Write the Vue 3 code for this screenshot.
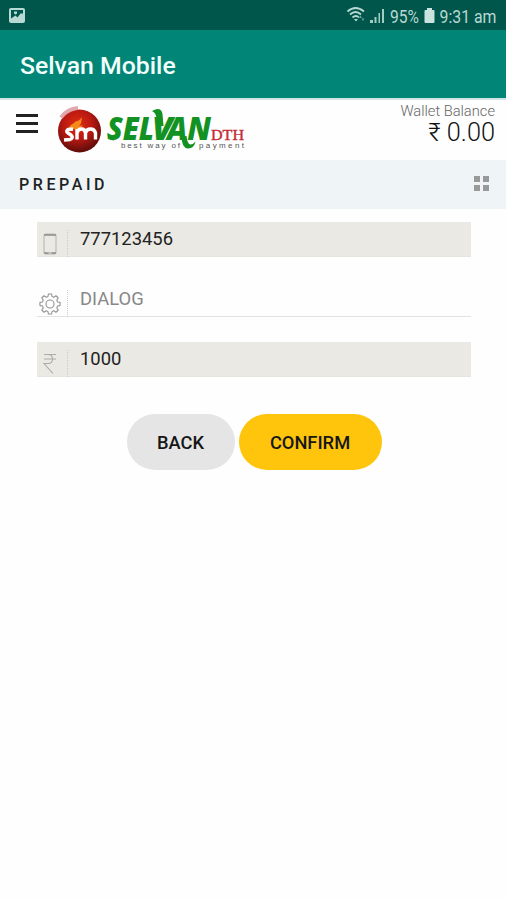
<template>
  <div class="screen">
    <!-- status bar -->
    <div class="status-bar">
      <svg class="picture-icon" width="16" height="16" viewBox="0 0 16 16">
        <rect x="0" y="0" width="16" height="15" rx="2" fill="#b9d9d4" />
        <path d="M2 2h12v3.500h-2.500l-3 4-2-2-4.500 3z" fill="#00564b" />
        <path d="M5 3.500h3v2l-1.500 1-1.500-1z" fill="#b9d9d4" />
      </svg>
      <svg class="status-info" width="154" height="30" viewBox="0 0 154 30">
        <g fill="none" stroke="#b9d9d4" stroke-width="1.700">
          <path d="M1.500 11.500Q9.500 4.500 18 11.500" />
          <path d="M4 14.500Q9.500 9.500 15 14.500" />
          <path d="M6.500 17.500Q10 14.500 13 17.500" />
        </g>
        <path d="M8 19l2 2.500 2-2.500z" fill="#b9d9d4" />
        <path d="M13 18l1.500-2.500 1.500 2.500zM15.500 18.500l1.500 2.500 1.500-2.500z" fill="#6ba39b" />
        <g fill="#a3cbc5">
          <rect x="24" y="20" width="3" height="3" />
          <rect x="28.500" y="17" width="2" height="6" />
          <rect x="32.500" y="13" width="1.500" height="10" />
          <rect x="36" y="9" width="2" height="14" />
        </g>
        <text x="44" y="22.500" textLength="29" lengthAdjust="spacingAndGlyphs">95%</text>
        <path d="M81 8h5v2h1.500q1 0 1 1v11q0 1-1 1h-8q-1 0-1-1v-11q0-1 1-1h1.500z" fill="#c9e4df" />
        <text x="93.500" y="22.500" textLength="57" lengthAdjust="spacingAndGlyphs">9:31 am</text>
      </svg>
    </div>

    <div class="app-bar">Selvan Mobile</div>

    <!-- logo and wallet -->
    <div class="header">
      <div class="burger"><i></i><i></i><i></i></div>
      <svg class="logo" width="190" height="52" viewBox="0 0 190 52">
        <defs>
          <radialGradient id="ball" cx="45%" cy="35%" r="62%">
            <stop offset="0" stop-color="#e02a12" />
            <stop offset=".55" stop-color="#b81912" />
            <stop offset="1" stop-color="#650d0b" />
          </radialGradient>
        </defs>
        <circle cx="24.500" cy="29" r="21.500" fill="url(#ball)" />
        <path d="M6 15.500Q12 7 23 6" fill="none" stroke="#d9929a" stroke-width="4" opacity=".8" />
        <path d="M14 26c1-4 5-4 7-7 1 1 4-1 6-4-1 5 0 6-3 9 2 0 3-1 4-1-3 5-8 5-14 3z" fill="#f58a1b" />
        <g fill="none" stroke="#fff" stroke-width="3.400" stroke-linejoin="round">
          <path d="M18 27l-5 .5q-2.500 1.500 0 3.500l3 2q3 3-1 4.500l-6 .5" />
          <path d="M22 37.500V27M22 31q1-4 4.500-4t4 4v6.500M30.500 31q1-4 5-4t5 4v6.500" />
        </g>
        <text class="logo-name" y="37.500"><tspan x="52" textLength="47" lengthAdjust="spacingAndGlyphs">SEL</tspan><tspan x="97" textLength="21" lengthAdjust="spacingAndGlyphs">V</tspan><tspan x="112" textLength="44" lengthAdjust="spacingAndGlyphs">AN</tspan></text>
        <g fill="#129222">
          <path d="M97 9Q106 4 107.500 12L108.500 24 102.500 24 101.500 16Q101 11 97 9z" />
          <path d="M126.500 34L131.500 34Q132.500 42.500 135.500 42.500 138 42.500 140.500 39.500 139 46.500 133 46.500 126.500 46 126.500 34z" />
          <path d="M52.500 31Q55 35 60 33.500L59 38.500Q52 38.500 52.500 31z" />
        </g>
        <text class="logo-dth" x="156" y="38" textLength="33" lengthAdjust="spacingAndGlyphs">DTH</text>
        <text class="logo-tag" x="66" y="46" textLength="59">best way of</text>
        <text class="logo-tag" x="144" y="46" textLength="45">payment</text>
      </svg>
      <div class="wallet">
        <div class="wallet-label">Wallet Balance</div>
        <div class="wallet-value">₹ 0.00</div>
      </div>
    </div>

    <div class="section-bar">
      <span>PREPAID</span>
      <div class="grid-icon"><i v-for="n in 4" :key="n"></i></div>
    </div>

    <div class="form">
      <div v-for="item in fields" :key="item.icon" class="field" :class="{ filled: item.filled }">
        <div class="field-icon">
          <svg v-if="item.icon === 'phone'" width="14" height="22" viewBox="0 0 14 22">
            <rect x="1" y="1" width="12" height="20" rx="1.500" fill="none" stroke="#b5b4ae" />
            <path d="M1 2h12M1 20h12" stroke="#8c8b84" stroke-width="1.500" />
            <path d="M5.500 20h3" stroke="#eae9e3" />
          </svg>
          <svg v-else-if="item.icon === 'gear'" width="22" height="22" viewBox="0 0 22 22">
            <g fill="none" stroke="#949494" stroke-width="1.100" stroke-linejoin="round">
              <path :d="gearPath" />
              <circle cx="11" cy="11" r="4" />
            </g>
          </svg>
          <svg v-else width="14" height="22" viewBox="0 0 14 22">
            <path d="M1 1.500h12M1 6h12M1 1.500h4q4.500 0 4.500 4.500t-4.500 4.500h-4l9 10" fill="none" stroke="#adaca5" stroke-width="1.100" />
          </svg>
        </div>
        <span class="field-text">{{ item.text }}</span>
      </div>
      <div class="buttons">
        <button class="btn back">BACK</button>
        <button class="btn confirm">CONFIRM</button>
      </div>
    </div>
  </div>
</template>

<script setup>
const fields = [
  { icon: 'phone', text: '777123456', filled: true },
  { icon: 'gear', text: 'DIALOG', filled: false },
  { icon: 'rupee', text: '1000', filled: true },
];

// 8 teeth, 4 points for each tooth
const gearPoints = [];
for (let i = 0; i < 8; i++) {
  [[-15, 7.8], [-9, 10.2], [9, 10.2], [15, 7.8]].forEach(([deg, r]) => {
    const a = ((i * 45 + deg) * Math.PI) / 180;
    gearPoints.push(`${(11 + r * Math.sin(a)).toFixed(2)} ${(11 - r * Math.cos(a)).toFixed(2)}`);
  });
}
const gearPath = `M${gearPoints.join('L')}Z`;
</script>

<style>
body {
  background: #fefefe;
}
</style>

<style scoped>
.screen {
  width: 506px;
  height: 900px;
  overflow: hidden;
  background: #fefefe;
  font-family: Roboto, "Liberation Sans", sans-serif;
  color: #222;
}

.status-bar {
  height: 30px;
  background: #00564b;
  display: flex;
  justify-content: space-between;
  padding: 0 6px 0 9px;
}

.picture-icon {
  margin-top: 8px;
}

.status-info {
  overflow: visible;
}

.status-info text {
  font-size: 18px;
  fill: #b9d9d4;
}

.app-bar {
  height: 68px;
  line-height: 71px;
  padding-left: 20px;
  background: #008577;
  color: #f2fffc;
  font-size: 24.8px;
  font-weight: 500;
}

.header {
  height: 62px;
  box-sizing: border-box;
  border-top: 2px solid #d3e4e7;
  display: flex;
  align-items: flex-start;
}

.burger {
  width: 22px;
  margin: 14px 0 0 16px;
  display: flex;
  flex-direction: column;
  gap: 5px;
}

.burger i {
  height: 3px;
  background: #222;
}

.logo {
  margin: 2px 0 0 17px;
}

.logo-name {
  font-family: "Open Sans", "Liberation Sans", sans-serif;
  font-size: 31px;
  font-weight: 800;
  font-style: italic;
  fill: #129222;
}

.logo-dth {
  font-family: "Liberation Serif", serif;
  font-size: 15.5px;
  fill: #c32b35;
  stroke: #c32b35;
  stroke-width: 0.4;
}

.logo-tag {
  font-family: "Liberation Sans", sans-serif;
  font-size: 8px;
  fill: #555;
}

.wallet {
  flex: 1;
  padding: 2px 11px 0 0;
  text-align: right;
}

.wallet-label {
  font-size: 14.7px;
  line-height: 18px;
  font-weight: 300;
  color: #666;
}

.wallet-value {
  font-size: 25.3px;
  line-height: 26px;
  font-weight: 300;
  color: #111;
}

.section-bar {
  height: 49px;
  box-sizing: border-box;
  padding: 0 17px 0 19px;
  background: #eff4f6;
  display: flex;
  align-items: center;
  justify-content: space-between;
  font-size: 16px;
  font-weight: 500;
  letter-spacing: 3.6px;
}

.grid-icon {
  display: grid;
  grid-template-columns: 6px 6px;
  gap: 3px;
  margin-bottom: 2px;
}

.grid-icon i {
  height: 6px;
  background: #999;
}

.form {
  padding: 13px 35px 0 37px;
}

.field {
  height: 34px;
  margin-bottom: 25px;
  display: flex;
  align-items: flex-start;
  border-bottom: 1px solid #e2e2e2;
}

.field.filled {
  background: #eae9e3;
  border-bottom-color: #e6e5df;
}

.field-icon {
  width: 31px;
  height: 27px;
  margin-top: 8px;
  box-sizing: border-box;
  border-right: 1px dotted #ccc;
  display: flex;
  align-items: center;
  padding-left: 6px;
}

.field:not(.filled) .field-icon {
  padding-left: 2px;
}

.field-text {
  padding-left: 12px;
  font-size: 18.4px;
  line-height: 33px;
}

.field:not(.filled) .field-text {
  color: #888;
}

.buttons {
  display: flex;
  justify-content: center;
  gap: 4px;
  padding-top: 12px;
}

.btn {
  height: 56px;
  border: none;
  border-radius: 28px;
  padding: 0;
  font-family: inherit;
  font-size: 18.3px;
  font-weight: 500;
  color: #161616;
}

.back {
  width: 108px;
  background: #e5e5e5;
}

.confirm {
  width: 143px;
  background: #fec50c;
}
</style>
